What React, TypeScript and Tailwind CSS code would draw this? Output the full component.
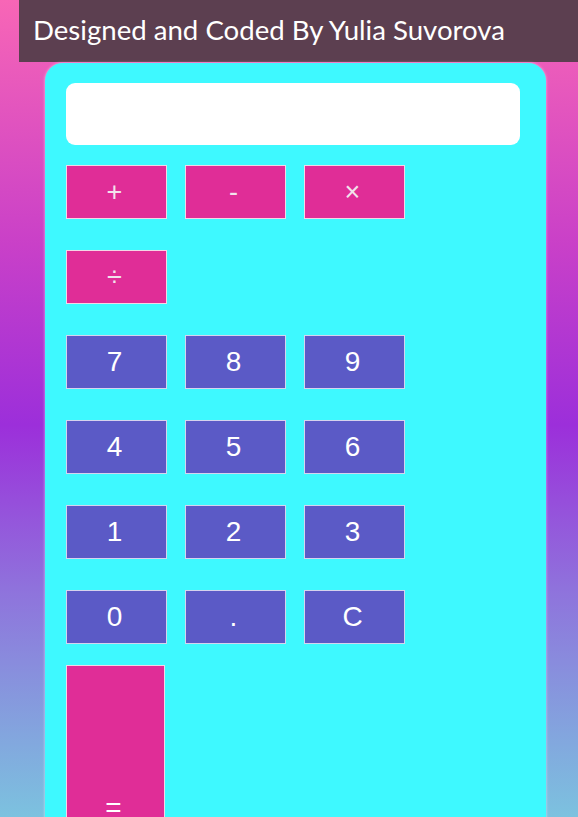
import React from "react";

const ops = ["+", "-", "×", "÷"];
const nums = ["7", "8", "9", "4", "5", "6", "1", "2", "3", "0", ".", "C"];

export default function App() {
  return (
    <div
      className="w-[578px] h-[817px] overflow-hidden relative"
      style={{
        background:
          "linear-gradient(to bottom, #f866b6 0%, #c940c8 30%, #9c2fda 52%, #8f72dc 72%, #7cc2df 100%)",
      }}
    >
      <div className="ml-[19px] h-[62px] bg-[#5c3f50] flex items-center pl-[14px] pb-[2px]">
        <span
          className="text-white text-[27.6px] leading-none whitespace-nowrap"
          style={{ fontFamily: "Lato, 'Noto Sans', sans-serif" }}
        >
          Designed and Coded By Yulia Suvorova
        </span>
      </div>
      <div className="ml-[45px] w-[501px] mt-[1px] bg-[#3ef9ff] rounded-t-[18px] pl-[21px] pr-[26px] pt-[20px] pb-[40px] shadow-[0_0_3px_rgba(255,255,255,0.6)]">
        <div className="h-[62px] bg-white rounded-[9px]" />
        <div
          className="mt-[20px] grid grid-cols-[101px_101px_101px] gap-x-[18px] gap-y-[31px]"
          style={{ fontFamily: "'Liberation Sans', Arial, sans-serif" }}
        >
          {ops.map((o) => (
            <div
              key={o}
              className="h-[54px] bg-[#e02d97] border border-[#f3d7e6] flex items-center justify-center pr-[4px] text-[#f2e3ec] text-[27px]"
            >
              {o}
            </div>
          ))}
          <div className="col-span-2" />
          {nums.map((n) => (
            <div
              key={n}
              className="h-[54px] bg-[#5b5ac6] border border-[#d5d3ee] flex items-center justify-center pr-[4px] text-white text-[28px]"
            >
              {n}
            </div>
          ))}
        </div>
        <div
          className="mt-[21px] w-[99px] h-[286px] bg-[#e02d97] border border-[#f3d7e6] flex items-center justify-center pr-[4px] text-white text-[28px]"
          style={{ fontFamily: "'Liberation Sans', Arial, sans-serif" }}
        >
          =
        </div>
      </div>
    </div>
  );
}
